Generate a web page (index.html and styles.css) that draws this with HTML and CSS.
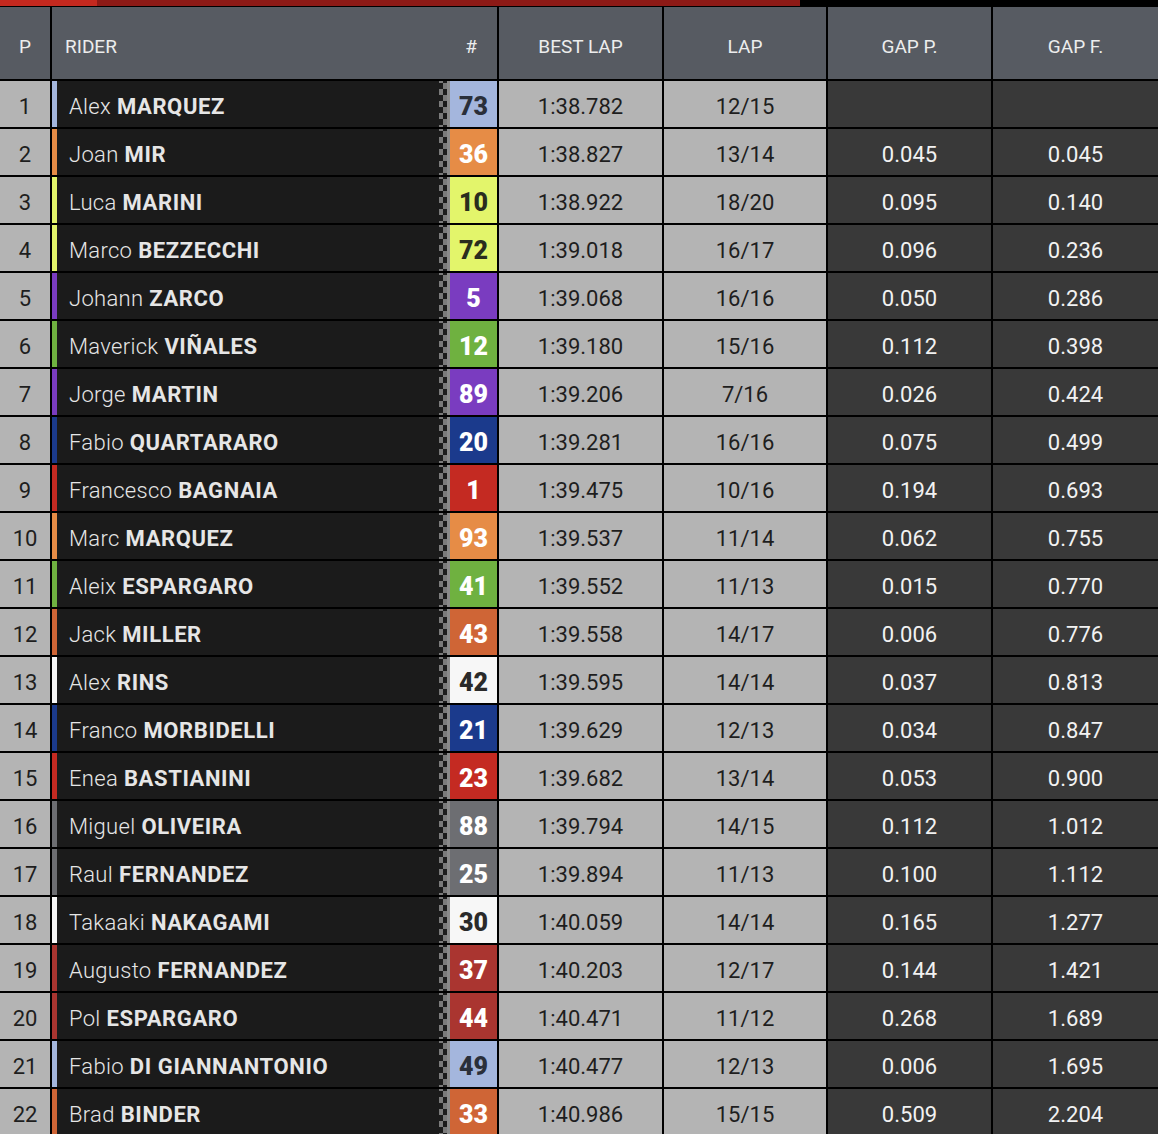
FILE: index.html
```html
<!DOCTYPE html>
<html lang="en">
<head>
<meta charset="utf-8">
<title>Timing</title>
<link rel="stylesheet" href="styles.css">
</head>
<body>
<div class="progress"><div class="progress-done"></div><div class="progress-rest"></div></div>
<div class="table">
  <div class="row head">
    <div class="c pos">P</div>
    <div class="c rider-h"><span>RIDER</span><span class="hash">#</span></div>
    <div class="c">BEST LAP</div>
    <div class="c">LAP</div>
    <div class="c">GAP P.</div>
    <div class="c last">GAP F.</div>
  </div>

  <div class="row"><div class="c pos">1</div><div class="rider"><div class="strip t-lblue"></div><div class="name">Alex <b>MARQUEZ</b></div><div class="check"></div><div class="num t-lblue">73</div></div><div class="c light">1:38.782</div><div class="c light">12/15</div><div class="c dark"></div><div class="c dark"></div></div>
  <div class="row"><div class="c pos">2</div><div class="rider"><div class="strip t-orange"></div><div class="name">Joan <b>MIR</b></div><div class="check"></div><div class="num t-orange">36</div></div><div class="c light">1:38.827</div><div class="c light">13/14</div><div class="c dark">0.045</div><div class="c dark">0.045</div></div>
  <div class="row"><div class="c pos">3</div><div class="rider"><div class="strip t-yellow"></div><div class="name">Luca <b>MARINI</b></div><div class="check"></div><div class="num t-yellow">10</div></div><div class="c light">1:38.922</div><div class="c light">18/20</div><div class="c dark">0.095</div><div class="c dark">0.140</div></div>
  <div class="row"><div class="c pos">4</div><div class="rider"><div class="strip t-yellow"></div><div class="name">Marco <b>BEZZECCHI</b></div><div class="check"></div><div class="num t-yellow">72</div></div><div class="c light">1:39.018</div><div class="c light">16/17</div><div class="c dark">0.096</div><div class="c dark">0.236</div></div>
  <div class="row"><div class="c pos">5</div><div class="rider"><div class="strip t-purple"></div><div class="name">Johann <b>ZARCO</b></div><div class="check"></div><div class="num t-purple">5</div></div><div class="c light">1:39.068</div><div class="c light">16/16</div><div class="c dark">0.050</div><div class="c dark">0.286</div></div>
  <div class="row"><div class="c pos">6</div><div class="rider"><div class="strip t-green"></div><div class="name">Maverick <b>VIÑALES</b></div><div class="check"></div><div class="num t-green">12</div></div><div class="c light">1:39.180</div><div class="c light">15/16</div><div class="c dark">0.112</div><div class="c dark">0.398</div></div>
  <div class="row"><div class="c pos">7</div><div class="rider"><div class="strip t-purple"></div><div class="name">Jorge <b>MARTIN</b></div><div class="check"></div><div class="num t-purple">89</div></div><div class="c light">1:39.206</div><div class="c light">7/16</div><div class="c dark">0.026</div><div class="c dark">0.424</div></div>
  <div class="row"><div class="c pos">8</div><div class="rider"><div class="strip t-blue"></div><div class="name">Fabio <b>QUARTARARO</b></div><div class="check"></div><div class="num t-blue">20</div></div><div class="c light">1:39.281</div><div class="c light">16/16</div><div class="c dark">0.075</div><div class="c dark">0.499</div></div>
  <div class="row"><div class="c pos">9</div><div class="rider"><div class="strip t-red"></div><div class="name">Francesco <b>BAGNAIA</b></div><div class="check"></div><div class="num t-red">1</div></div><div class="c light">1:39.475</div><div class="c light">10/16</div><div class="c dark">0.194</div><div class="c dark">0.693</div></div>
  <div class="row"><div class="c pos">10</div><div class="rider"><div class="strip t-orange"></div><div class="name">Marc <b>MARQUEZ</b></div><div class="check"></div><div class="num t-orange">93</div></div><div class="c light">1:39.537</div><div class="c light">11/14</div><div class="c dark">0.062</div><div class="c dark">0.755</div></div>
  <div class="row"><div class="c pos">11</div><div class="rider"><div class="strip t-green"></div><div class="name">Aleix <b>ESPARGARO</b></div><div class="check"></div><div class="num t-green">41</div></div><div class="c light">1:39.552</div><div class="c light">11/13</div><div class="c dark">0.015</div><div class="c dark">0.770</div></div>
  <div class="row"><div class="c pos">12</div><div class="rider"><div class="strip t-ktm"></div><div class="name">Jack <b>MILLER</b></div><div class="check"></div><div class="num t-ktm">43</div></div><div class="c light">1:39.558</div><div class="c light">14/17</div><div class="c dark">0.006</div><div class="c dark">0.776</div></div>
  <div class="row"><div class="c pos">13</div><div class="rider"><div class="strip t-white"></div><div class="name">Alex <b>RINS</b></div><div class="check"></div><div class="num t-white">42</div></div><div class="c light">1:39.595</div><div class="c light">14/14</div><div class="c dark">0.037</div><div class="c dark">0.813</div></div>
  <div class="row"><div class="c pos">14</div><div class="rider"><div class="strip t-blue"></div><div class="name">Franco <b>MORBIDELLI</b></div><div class="check"></div><div class="num t-blue">21</div></div><div class="c light">1:39.629</div><div class="c light">12/13</div><div class="c dark">0.034</div><div class="c dark">0.847</div></div>
  <div class="row"><div class="c pos">15</div><div class="rider"><div class="strip t-red"></div><div class="name">Enea <b>BASTIANINI</b></div><div class="check"></div><div class="num t-red">23</div></div><div class="c light">1:39.682</div><div class="c light">13/14</div><div class="c dark">0.053</div><div class="c dark">0.900</div></div>
  <div class="row"><div class="c pos">16</div><div class="rider"><div class="strip t-gray"></div><div class="name">Miguel <b>OLIVEIRA</b></div><div class="check"></div><div class="num t-gray">88</div></div><div class="c light">1:39.794</div><div class="c light">14/15</div><div class="c dark">0.112</div><div class="c dark">1.012</div></div>
  <div class="row"><div class="c pos">17</div><div class="rider"><div class="strip t-gray"></div><div class="name">Raul <b>FERNANDEZ</b></div><div class="check"></div><div class="num t-gray">25</div></div><div class="c light">1:39.894</div><div class="c light">11/13</div><div class="c dark">0.100</div><div class="c dark">1.112</div></div>
  <div class="row"><div class="c pos">18</div><div class="rider"><div class="strip t-white"></div><div class="name">Takaaki <b>NAKAGAMI</b></div><div class="check"></div><div class="num t-white">30</div></div><div class="c light">1:40.059</div><div class="c light">14/14</div><div class="c dark">0.165</div><div class="c dark">1.277</div></div>
  <div class="row"><div class="c pos">19</div><div class="rider"><div class="strip t-dred"></div><div class="name">Augusto <b>FERNANDEZ</b></div><div class="check"></div><div class="num t-dred">37</div></div><div class="c light">1:40.203</div><div class="c light">12/17</div><div class="c dark">0.144</div><div class="c dark">1.421</div></div>
  <div class="row"><div class="c pos">20</div><div class="rider"><div class="strip t-dred"></div><div class="name">Pol <b>ESPARGARO</b></div><div class="check"></div><div class="num t-dred">44</div></div><div class="c light">1:40.471</div><div class="c light">11/12</div><div class="c dark">0.268</div><div class="c dark">1.689</div></div>
  <div class="row"><div class="c pos">21</div><div class="rider"><div class="strip t-lblue"></div><div class="name">Fabio <b>DI GIANNANTONIO</b></div><div class="check"></div><div class="num t-lblue">49</div></div><div class="c light">1:40.477</div><div class="c light">12/13</div><div class="c dark">0.006</div><div class="c dark">1.695</div></div>
  <div class="row"><div class="c pos">22</div><div class="rider"><div class="strip t-ktm"></div><div class="name">Brad <b>BINDER</b></div><div class="check"></div><div class="num t-ktm">33</div></div><div class="c light">1:40.986</div><div class="c light">15/15</div><div class="c dark">0.509</div><div class="c dark">2.204</div></div>
</div>
</body>
</html>
```

FILE: styles.css
```css
html, body {
  margin: 0;
  padding: 0;
  background: #000;
}
body {
  font-family: Roboto, "Liberation Sans", sans-serif;
  width: 1158px;
  height: 1134px;
  overflow: hidden;
}
.progress {
  display: flex;
  height: 6px;
  margin-bottom: 1px;
}
.progress-done {
  width: 97px;
  background: #c4291f;
}
.progress-rest {
  width: 703px;
  background: #8d1a16;
}
.table {
  display: flex;
  flex-direction: column;
  gap: 2px;
}
.row {
  display: grid;
  grid-template-columns: 50px 445px 163px 162px 163px 165px;
  column-gap: 2px;
  height: 46px;
}
.row.head {
  height: 72px;
}
.c {
  display: flex;
  align-items: center;
  justify-content: center;
  font-size: 22px;
  padding-top: 5px;
  box-sizing: border-box;
}
.head .c {
  background: #575b62;
  color: #eceded;
  font-size: 19px;
  padding-top: 6px;
}
.head .rider-h {
  justify-content: space-between;
  padding-left: 13px;
  padding-right: 20px;
}
.pos {
  background: #b4b4b4;
  color: #1e1e1e;
}
.light {
  background: #b4b4b4;
  color: #1e1e1e;
}
.dark {
  background: #393939;
  color: #f2f2f2;
}
.rider {
  display: grid;
  grid-template-columns: 5px 382px 11px 47px;
  background: #1b1b1b;
}
.name {
  display: flex;
  align-items: center;
  padding-left: 12px;
  padding-top: 5px;
  font-size: 22px;
  font-weight: 300;
  letter-spacing: 0.3px;
  color: #e6e6e6;
  white-space: nowrap;
}
.name b {
  font-weight: 700;
  letter-spacing: 0.6px;
  margin-left: 6px;
}
.check {
  background:
    linear-gradient(#8a8a8a, #8a8a8a) right / 3px 100% no-repeat,
    repeating-conic-gradient(#7a7a7a 0 25%, #1b1b1b 0 50%) 0 2px / 8px 12px;
}
.num {
  display: flex;
  align-items: center;
  justify-content: center;
  padding-top: 5px;
  box-sizing: border-box;
  font-size: 25px;
  font-weight: 900;
  color: #fff;
}
.t-lblue { background: #a4b6dd; color: #2a2f3a; }
.t-orange { background: #e68c46; }
.t-yellow { background: #e3f56b; color: #2a2d1e; }
.t-purple { background: #7a3cc0; }
.t-green { background: #6fb140; }
.t-blue { background: #1b3a8c; }
.t-red { background: #c42a22; }
.t-ktm { background: #cf6536; }
.t-white { background: #f7f7f7; color: #2a2a2a; }
.t-gray { background: #6d6e72; }
.t-dred { background: #aa3530; }
```
